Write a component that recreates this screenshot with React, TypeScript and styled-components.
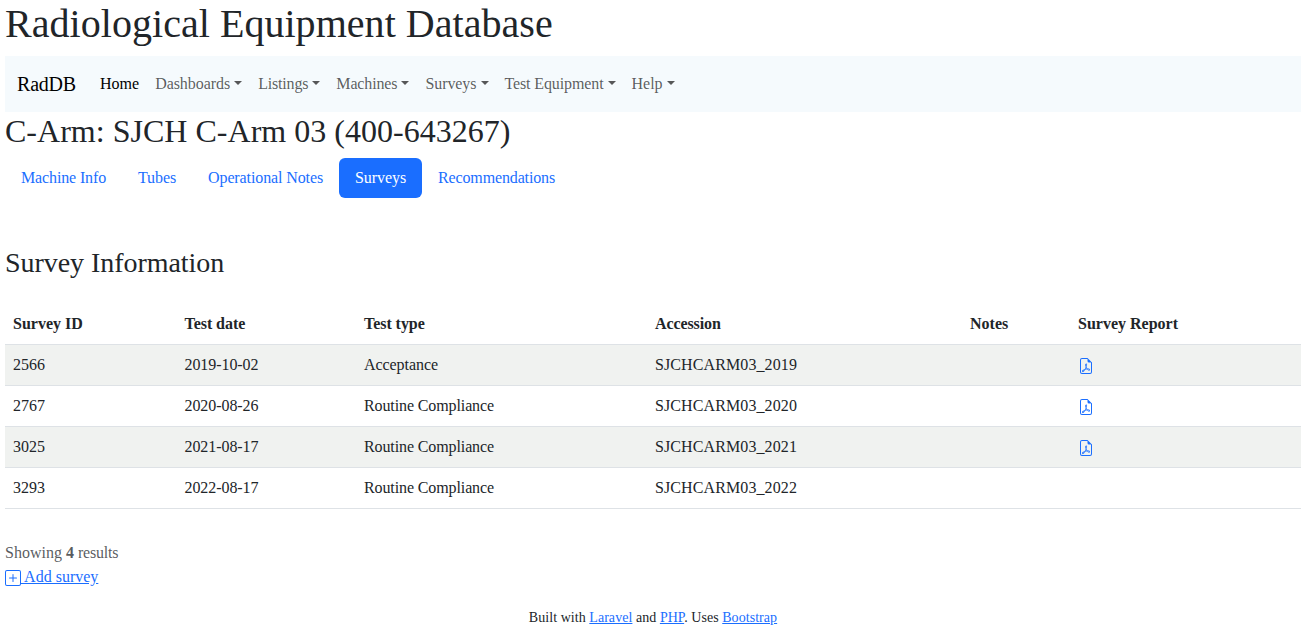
import React from "react";
import styled, { createGlobalStyle } from "styled-components";
import { BsFileEarmarkPdf, BsPlusSquare } from "react-icons/bs";

const Global = createGlobalStyle`
  *, *::before, *::after { box-sizing: border-box; }
  body {
    margin: 0;
    background: #fff;
    color: #212529;
    font: 400 16px/1.5 "Liberation Serif", "Times New Roman", serif;
  }
`;

const Page = styled.div`
  padding: 0 13px 0 5px;
`;

const Title = styled.h1`
  margin: 0 0 8px;
  font-size: 40px;
  font-weight: 500;
  line-height: 48px;
  letter-spacing: 0.04px;
`;

const Navbar = styled.nav`
  display: flex;
  align-items: center;
  height: 56px;
  padding: 8px 12px;
  background: #f5fafd;
`;

const Brand = styled.a`
  margin-right: 16px;
  font-size: 20px;
  line-height: 30px;
  letter-spacing: -0.2px;
  color: #000;
`;

const NavItem = styled.a<{ $active?: boolean; $menu?: boolean; $track?: number }>`
  padding: 8px;
  color: ${(p) => (p.$active ? "#000" : "rgba(0, 0, 0, 0.65)")};
  letter-spacing: ${(p) => p.$track ?? 0}px;
  white-space: nowrap;
  &::after {
    content: ${(p) => (p.$menu ? '""' : "none")};
    display: inline-block;
    margin-left: 4.08px;
    vertical-align: 4.08px;
    border-top: 4.8px solid;
    border-right: 4.8px solid transparent;
    border-left: 4.8px solid transparent;
  }
`;

const Heading = styled.h2`
  margin: 0 0 8px;
  font-size: 32px;
  font-weight: 500;
  line-height: 38.4px;
  letter-spacing: 0.02px;
`;

const Pills = styled.nav`
  display: flex;
  margin-bottom: 48px;
`;

const Pill = styled.a<{ $active?: boolean; $track: number }>`
  padding: 8px 16px;
  border-radius: 6px;
  letter-spacing: ${(p) => p.$track}px;
  color: ${(p) => (p.$active ? "#fff" : "#1a6eff")};
  background: ${(p) => (p.$active ? "#1a6eff" : "transparent")};
`;

const Subheading = styled.h3`
  margin: 0 0 24px;
  font-size: 28px;
  font-weight: 500;
  line-height: 33.6px;
  letter-spacing: -0.05px;
`;

const Table = styled.table`
  width: 100%;
  margin-bottom: 32px;
  border-collapse: separate;
  border-spacing: 0;
  table-layout: fixed;
  text-align: left;
`;

const Col = styled.col<{ $w?: number }>`
  width: ${(p) => (p.$w ? `${p.$w}px` : "auto")};
`;

const Cell = styled.td<{ $track?: number }>`
  height: 41px;
  padding: 8px;
  border-bottom: 1px solid #dee2e6;
  letter-spacing: ${(p) => p.$track ?? 0}px;
`;

const Row = styled.tr`
  &:nth-child(odd) { background: #f0f2f0; }
`;

const Link = styled.a`
  color: #1a6eff;
  text-decoration: underline;
  svg { display: inline-block; vertical-align: -4px; }
`;

const Summary = styled.div`
  color: rgba(33, 37, 41, 0.75);
`;

const Results = styled.span`
  letter-spacing: -0.2px;
`;

const Footer = styled.footer`
  margin-top: 18px;
  text-align: center;
  font-size: 14px;
  line-height: 21px;
  letter-spacing: 0.05px;
`;

const menus = [
  { label: "Dashboards", track: -0.05 },
  { label: "Listings", track: -0.196 },
  { label: "Machines", track: -0.15 },
  { label: "Surveys", track: -0.08 },
  { label: "Test Equipment", track: -0.12 },
  { label: "Help", track: -0.02 },
];
const tabs = [
  { label: "Machine Info", track: -0.137 },
  { label: "Tubes", track: -0.1 },
  { label: "Operational Notes", track: -0.11 },
  { label: "Surveys", track: -0.08 },
  { label: "Recommendations", track: -0.14 },
];
const columns = [
  { label: "Survey ID", width: 171.5 },
  { label: "Test date", width: 179.5, track: -0.05 },
  { label: "Test type", width: 291, track: -0.05 },
  { label: "Accession", width: 315, track: -0.1 },
  { label: "Notes", width: 108 },
  { label: "Survey Report" },
];
const surveys = [
  { id: 2566, date: "2019-10-02", type: "Acceptance", accession: "SJCHCARM03_2019", report: true },
  { id: 2767, date: "2020-08-26", type: "Routine Compliance", accession: "SJCHCARM03_2020", report: true },
  { id: 3025, date: "2021-08-17", type: "Routine Compliance", accession: "SJCHCARM03_2021", report: true },
  { id: 3293, date: "2022-08-17", type: "Routine Compliance", accession: "SJCHCARM03_2022", report: false },
];

export default function App() {
  return (
    <Page>
      <Global />
      <Title>Radiological Equipment Database</Title>
      <Navbar>
        <Brand>RadDB</Brand>
        <NavItem $active>Home</NavItem>
        {menus.map((m) => <NavItem key={m.label} $menu $track={m.track}>{m.label}</NavItem>)}
      </Navbar>
      <Heading>C-Arm: SJCH C-Arm 03 (400-643267)</Heading>
      <Pills>
        {tabs.map((t) => (
          <Pill key={t.label} $active={t.label === "Surveys"} $track={t.track}>{t.label}</Pill>
        ))}
      </Pills>
      <Subheading>Survey Information</Subheading>
      <Table>
        <colgroup>{columns.map((c) => <Col key={c.label} $w={c.width} />)}</colgroup>
        <thead>
          <tr>{columns.map((c) => <Cell as="th" key={c.label} $track={c.track}>{c.label}</Cell>)}</tr>
        </thead>
        <tbody>
          {surveys.map((s) => (
            <Row key={s.id}>
              <Cell>{s.id}</Cell>
              <Cell $track={-0.07}>{s.date}</Cell>
              <Cell $track={s.type === "Acceptance" ? -0.06 : -0.11}>{s.type}</Cell>
              <Cell $track={0.1}>{s.accession}</Cell>
              <Cell />
              <Cell>{s.report && <Link><BsFileEarmarkPdf /></Link>}</Cell>
            </Row>
          ))}
        </tbody>
      </Table>
      <Summary>Showing <b>4</b> <Results>results</Results></Summary>
      <Link><BsPlusSquare /> Add survey</Link>
      <Footer>
        Built with <Link>Laravel</Link> and <Link>PHP</Link>. Uses <Link>Bootstrap</Link>
      </Footer>
    </Page>
  );
}
